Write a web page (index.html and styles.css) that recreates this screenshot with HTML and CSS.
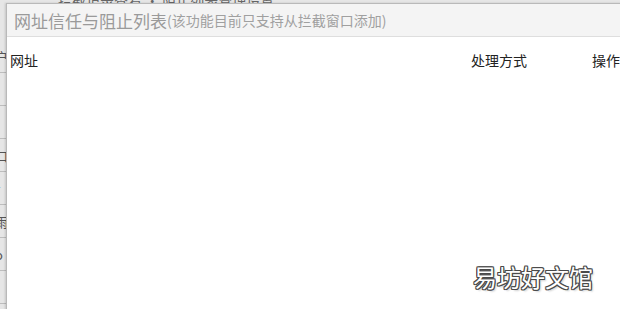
FILE: index.html
```html
<!DOCTYPE html>
<html lang="zh-CN">
<head>
    <meta charset="UTF-8">
    <title>网址信任与阻止列表</title>
    <link rel="stylesheet" href="styles.css">
</head>
<body>
    <!-- window behind the dialog, only its edges show -->
    <div class="behind">
        <div class="behind-top">拦截记录查看 · 阻止列表管理设置</div>
        <div class="behind-left">
            <span>户</span><span></span><span></span><span>口</span><span>r</span><span>雨</span><span>o</span><span></span>
        </div>
    </div>

    <div class="dialog">
        <div class="title-bar">
            <span class="title">网址信任与阻止列表</span><span class="title-note">(该功能目前只支持从拦截窗口添加)</span>
        </div>
        <div class="list">
            <div class="list-head">
                <div class="col-url">网址</div>
                <div class="col-mode">处理方式</div>
                <div class="col-op">操作</div>
            </div>
        </div>
    </div>

    <div class="watermark">易坊好文馆</div>
</body>
</html>
```

FILE: styles.css
```css
* {
    margin: 0;
    padding: 0;
    box-sizing: border-box;
}

body {
    width: 620px;
    height: 309px;
    overflow: hidden;
    position: relative;
    background-color: #e6e6e6;
    font-family: "Microsoft YaHei", "Noto Sans CJK SC", sans-serif;
}

.behind {
    position: absolute;
    left: 0;
    top: 0;
    width: 620px;
    height: 309px;
}

.behind-top {
    position: absolute;
    left: 58px;
    top: -10px;
    font-size: 14px;
    color: #666;
}

.behind-left {
    position: absolute;
    left: 0;
    top: 40px;
    width: 6px;
    display: flex;
    flex-direction: column;
}

.behind-left span {
    display: block;
    height: 33px;
    border-bottom: 1px solid #bdbdbd;
    font-size: 13px;
    line-height: 33px;
    color: #555;
    text-indent: -5px;
    overflow: hidden;
}

.dialog {
    position: absolute;
    left: 6px;
    top: 3px;
    width: 620px;
    height: 320px;
    background-color: #fff;
    border: 1px solid #b9b9b9;
    box-shadow: -1px 0 2px rgba(0, 0, 0, 0.15);
}

.title-bar {
    height: 33px;
    background-color: #f4f4f4;
    border-bottom: 1px solid #dedede;
    padding-left: 7px;
    display: flex;
    align-items: center;
    color: #9a9a9a;
}

.title {
    font-size: 17px;
}

.title-note {
    font-size: 14px;
    color: #a0a0a0;
}

.list-head {
    display: flex;
    height: 46px;
    align-items: center;
    font-size: 14px;
    color: #222;
}

.col-url {
    width: 464px;
    padding-left: 3px;
}

.col-mode {
    width: 121px;
}

.col-op {
    white-space: nowrap;
}

.watermark {
    position: absolute;
    left: 473px;
    top: 259px;
    font-size: 24px;
    line-height: 36px;
    color: #fff;
    text-shadow:
        1px 0 0 #4a4a4a,
        -1px 0 0 #4a4a4a,
        0 1px 0 #4a4a4a,
        0 -1px 0 #4a4a4a,
        1px 1px 0 #4a4a4a,
        -1px -1px 0 #4a4a4a,
        1px -1px 0 #4a4a4a,
        -1px 1px 0 #4a4a4a,
        2px 2px 2px rgba(0, 0, 0, 0.2);
}
```
